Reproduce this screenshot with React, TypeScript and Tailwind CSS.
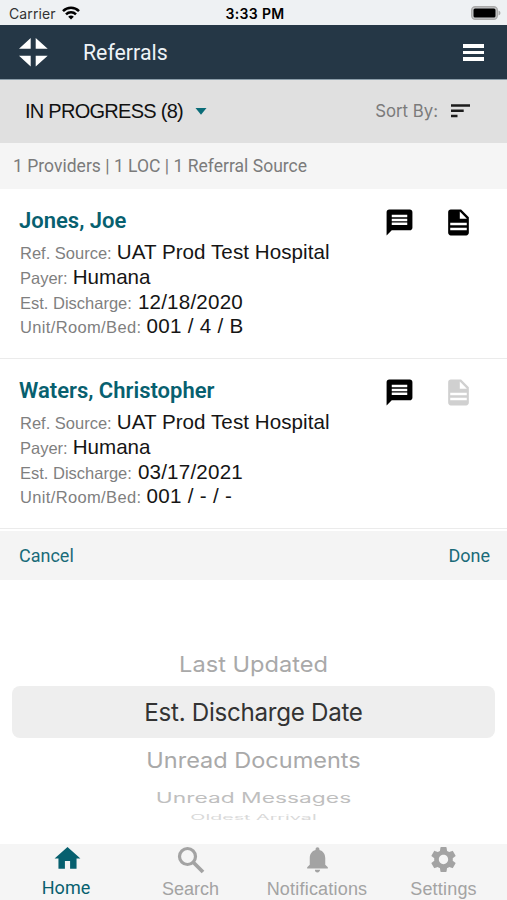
import type { ReactNode } from "react";
import { MdHome, MdMessage, MdNotifications, MdSettings } from "react-icons/md";

type Referral = {
  name: string;
  source: string;
  payer: string;
  discharge: string;
  location: string;
  hasDocuments: boolean;
};

const referrals: Referral[] = [
  {
    name: "Jones, Joe",
    source: "UAT Prod Test Hospital",
    payer: "Humana",
    discharge: "12/18/2020",
    location: "001 / 4 / B",
    hasDocuments: true,
  },
  {
    name: "Waters, Christopher",
    source: "UAT Prod Test Hospital",
    payer: "Humana",
    discharge: "03/17/2021",
    location: "001 / - / -",
    hasDocuments: false,
  },
];

function StatusBar() {
  return (
    <div className="grid h-[25px] grid-cols-3 items-center bg-[#eef1f3] pt-[3px] pr-[6px] pl-[9px] font-['Inter',sans-serif]">
      <div className="flex items-center gap-[6px]">
        <span className="text-[14px] leading-none tracking-[0.1px] text-[#333]">Carrier</span>
        <svg
          className="-mt-[2px]"
          width="18"
          height="14"
          viewBox="0 0 18 14"
          fill="none"
          stroke="#000"
          strokeWidth="2.5"
        >
          <path d="M1 5.2C5.5.7 12.5.7 17 5.2" />
          <path d="M4 8.3c2.8-2.8 7.2-2.8 10 0" />
          <path d="M9 13.5 6.2 10.7c1.6-1.5 4-1.5 5.6 0Z" fill="#000" stroke="none" />
        </svg>
      </div>
      <span className="text-center text-[14px] leading-none font-semibold tracking-[0.35px] text-black">
        3:33 PM
      </span>
      <svg className="-mt-[2px] justify-self-end" width="30" height="14" viewBox="0 0 30 14">
        <rect x=".7" y=".7" width="25.6" height="12.6" rx="3.5" fill="#c9cbcc" stroke="#aaa" strokeWidth="1.4" />
        <rect x="2.5" y="2.5" width="22" height="9" rx="1.5" fill="#000" />
        <path d="M27.5 4.5c2.6.8 2.6 4.2 0 5Z" fill="#aaa" />
      </svg>
    </div>
  );
}

function Header() {
  return (
    <header className="flex h-[55px] items-center border-b border-[#8b9da9] bg-[#253746] pr-[23px] pl-[19px]">
      <svg width="29" height="29" viewBox="0 0 29 29" fill="#fff">
        <path d="M11.7 0v10.7H0zM16.7 0v10.7h12zM0 17.7h11.7v10.7zM16.7 17.7h12l-12 10.7z" />
      </svg>
      <h1 className="mt-px ml-[35px] font-['Roboto',sans-serif] text-[21.3px] leading-none text-[#eef3f7]">
        Referrals
      </h1>
      <button className="mt-px ml-auto flex flex-col gap-[3px]" aria-label="Menu">
        <span className="h-[3.5px] w-[21px] bg-white" />
        <span className="h-[3.5px] w-[21px] bg-white" />
        <span className="h-[3.5px] w-[21px] bg-white" />
      </button>
    </header>
  );
}

function FilterBar() {
  return (
    <div className="flex h-[63px] items-center bg-[#e0e0e0] pr-[37px] pl-[25px]">
      <span className="-mt-[2px] font-['Liberation_Sans',sans-serif] text-[20px] leading-none tracking-[-0.73px] text-[#111]">
        IN PROGRESS (8)
      </span>
      <svg className="ml-[12px]" width="12" height="7" viewBox="0 0 12 7" fill="#0a6c78">
        <path d="M.5 0h11L6 6.8z" />
      </svg>
      <span className="ml-auto font-['Inter',sans-serif] text-[16.8px] leading-none text-[#7b7b7b]">
        Sort By:
      </span>
      <svg className="-mt-[2px] ml-[13px]" width="19" height="14" viewBox="0 0 19 14" fill="#1c1c1c">
        <path d="M0 .3h19v2.5H0zM0 5.500h12.700V8H0zM0 10.700h6.500v2.500H0z" />
      </svg>
    </div>
  );
}

function DocumentIcon({ active }: { active: boolean }) {
  return (
    <svg
      className={active ? "text-black" : "text-[#d0d0d0]"}
      width="31"
      height="31"
      viewBox="0 0 24 24"
      fill="currentColor"
      fillRule="evenodd"
    >
      <path d="M14 2H6c-1.1 0-2 .9-2 2v16c0 1.1.9 2 2 2h12c1.1 0 2-.9 2-2V8l-6-6zM13 3.5 18.5 9H13zM5.6 12.2h12.8v2H5.6zM5.6 16h12.8v2H5.6z" />
    </svg>
  );
}

function SearchIcon() {
  return (
    <svg width="28" height="28" viewBox="0 0 28 28" fill="none" stroke="currentColor">
      <circle cx="10.5" cy="10.5" r="8" strokeWidth="3.2" />
      <path d="M16.500 16.500 26 26" strokeWidth="3.800" />
    </svg>
  );
}

function Field({ label, wide, children }: { label: string; wide?: boolean; children: ReactNode }) {
  return (
    <div className="flex h-[24.8px] items-baseline gap-[5px] leading-[24.8px] whitespace-nowrap">
      <dt className={`text-[16.5px] text-[#7f7f7f] ${wide ? "tracking-[0.35px]" : ""}`}>{label}</dt>
      <dd className={`text-[20.6px] text-[#151515] ${wide ? "tracking-[0.3px]" : ""}`}>{children}</dd>
    </div>
  );
}

function ReferralCard({ referral }: { referral: Referral }) {
  return (
    <article className="flex h-[170px] shrink-0 justify-between border-b border-[#ebebeb] bg-white pr-[33px] pl-[19px]">
      <div className="pt-[19px]">
        <h2 className="font-['Roboto',sans-serif] text-[22px] leading-[25px] font-semibold text-[#07606f]">
          {referral.name}
        </h2>
        <dl className="mt-[7px] ml-px font-['Liberation_Sans',sans-serif]">
          <Field label="Ref. Source:">
            <span className="tracking-[0.05px]">{referral.source}</span>
          </Field>
          <Field label="Payer:">{referral.payer}</Field>
          <Field label="Est. Discharge:">
            <span className="ml-px tracking-[0.2px]">{referral.discharge}</span>
          </Field>
          <Field label="Unit/Room/Bed:" wide>
            {referral.location}
          </Field>
        </dl>
      </div>
      <div className="flex gap-[28px] pt-[18px]">
        <MdMessage className="size-[31px] shrink-0 text-black" />
        <DocumentIcon active={referral.hasDocuments} />
      </div>
    </article>
  );
}

function SortPicker() {
  return (
    <section className="pt-[2px]">
      <div className="flex h-[49px] items-center justify-between bg-[#f4f4f4] pr-[17px] pl-[19px] font-['Roboto',sans-serif] text-[18px] text-[#1a6b79]">
        <button>Cancel</button>
        <button>Done</button>
      </div>
      <div className="flex h-[264px] flex-col items-center bg-white px-[12px] pt-[61px] font-['Inter',sans-serif] whitespace-nowrap">
        <div className="flex h-[45px] items-center pt-[2px] text-[23.6px] text-[#a9a9a9]">
          <span className="scale-y-[0.92]">Last Updated</span>
        </div>
        <div className="flex h-[52px] w-full items-center justify-center rounded-[8px] bg-[#eeeeee] pt-[2px] text-[24.2px] tracking-[-0.3px] text-[#333]">
          Est. Discharge Date
        </div>
        <div className="flex h-[44px] items-center pt-[2px] text-[23.5px] text-[#a9a9a9]">
          <span className="scale-y-[0.92]">Unread Documents</span>
        </div>
        <div className="flex h-[32px] items-center text-[22.8px] text-[#bfbfbf]">
          <span className="scale-y-[0.62]">Unread Messages</span>
        </div>
        <div className="h-[8px] text-[19.7px] leading-[19px] text-[#d9d9d9]">
          <span className="block origin-top scale-y-[0.36]">Oldest Arrival</span>
        </div>
      </div>
    </section>
  );
}

function TabBar() {
  return (
    <nav className="flex h-[56px] bg-[#f5f5f5] font-['Liberation_Sans',sans-serif] text-[18px] leading-[20px] text-[#a3a3a3]">
      <a className="flex w-[133px] flex-col items-center font-['Roboto',sans-serif] text-[#07606f]">
        <MdHome className="-mt-px ml-px size-[31px]" />
        <span className="mt-[4px] mr-px">Home</span>
      </a>
      <a className="flex w-[115px] flex-col items-center pt-[2px]">
        <SearchIcon />
        <span className="mt-[5px]">Search</span>
      </a>
      <a className="flex w-[138px] flex-col items-center">
        <MdNotifications className="size-[31px]" />
        <span className="mt-[4px] tracking-[0.2px]">Notifications</span>
      </a>
      <a className="flex w-[115px] flex-col items-center">
        <MdSettings className="size-[31px]" />
        <span className="mt-[4px] tracking-[0.2px]">Settings</span>
      </a>
    </nav>
  );
}

export default function App() {
  return (
    <div className="flex h-[900px] w-[507px] flex-col overflow-hidden bg-white">
      <StatusBar />
      <Header />
      <FilterBar />
      <p className="h-[46px] bg-[#f5f5f5] pl-[13px] font-['Roboto',sans-serif] text-[17.5px] leading-[46px] tracking-[0.02px] text-[#7b7b7b]">
        1 Providers | 1 LOC | 1 Referral Source
      </p>
      {referrals.map((referral) => (
        <ReferralCard key={referral.name} referral={referral} />
      ))}
      <SortPicker />
      <TabBar />
    </div>
  );
}
